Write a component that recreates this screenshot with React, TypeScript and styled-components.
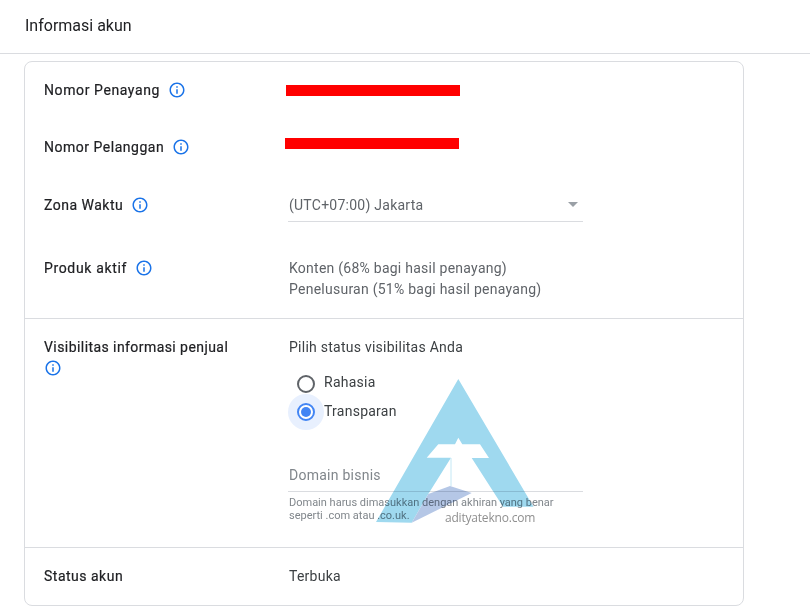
import React from 'react'
import styled, { createGlobalStyle } from 'styled-components'

const GlobalStyle = createGlobalStyle`
  html, body { margin: 0; padding: 0; background: #fff; }
  body { font-family: Roboto, "Liberation Sans", sans-serif; color: #202124; }
`

const Page = styled.div`
  position: relative;
  width: 810px;
  height: 610px;
  overflow: hidden;
`

const Header = styled.header`
  height: 51px;
  border-bottom: 1px solid #dadce0;
  display: flex;
  align-items: center;
  padding: 0 25px 2px;
  font-size: 16px;
  color: #202124;
`

const Card = styled.section`
  width: 720px;
  height: 545px;
  box-sizing: border-box;
  margin: 7px 0 0 24px;
  border: 1px solid #dadce0;
  border-radius: 8px;
  display: flex;
  flex-direction: column;
`

const Section = styled.div<{ $height: number }>`
  height: ${p => p.$height}px;
  box-sizing: border-box;
  & + & { border-top: 1px solid #dadce0; }
`

const Row = styled.div<{ $height?: number; $top?: boolean; $pad?: number }>`
  display: grid;
  grid-template-columns: 245px 1fr;
  padding-left: 19px;
  padding-top: ${p => p.$pad ?? 0}px;
  height: ${p => (p.$height ? `${p.$height}px` : 'auto')};
  box-sizing: border-box;
  align-items: ${p => (p.$top ? 'start' : 'center')};
`

const Label = styled.div<{ $track: number; $stack?: boolean; $down?: number }>`
  display: ${p => (p.$stack ? 'block' : 'flex')};
  align-items: center;
  column-gap: 8px;
  margin-top: ${p => p.$down ?? 0}px;
  font-size: 14px;
  font-weight: 400;
  -webkit-text-stroke: 0.2px #202124;
  line-height: 21px;
  letter-spacing: ${p => p.$track}px;
  color: #202124;
`

const InfoButton = styled.svg<{ $block?: boolean }>`
  width: 18px;
  height: 18px;
  fill: #1a73e8;
  flex: none;
  ${p => (p.$block ? 'display: block; margin-top: 1px;' : 'margin-top: -2px;')}
`

const Value = styled.div`
  font-size: 14px;
  line-height: 21px;
  letter-spacing: 0.25px;
  color: #5f6368;
`

const DarkValue = styled(Value)`
  color: #3c4043;
`

const Redaction = styled.div<{ $left: number; $up: number }>`
  width: 174px;
  height: 11px;
  background: #ff0000;
  margin-left: ${p => p.$left}px;
  margin-top: ${p => p.$up}px;
`

const Select = styled.div`
  width: 295px;
  height: 33px;
  box-sizing: border-box;
  margin: 13px 0 0 -1px;
  padding: 0 5px 0 1px;
  display: flex;
  align-items: center;
  justify-content: space-between;
  border-bottom: 1px solid #dadce0;
  font-size: 14px;
  letter-spacing: 0.25px;
  color: #5f6368;
`

const Caret = styled.span`
  width: 0;
  height: 0;
  border-left: 5px solid transparent;
  border-right: 5px solid transparent;
  border-top: 5px solid #9aa0a6;
  margin-top: -1px;
`

const RadioGroup = styled.div`
  margin: 12px 0 0 -1px;
  display: flex;
  flex-direction: column;
`

const RadioRow = styled.div`
  display: flex;
  align-items: center;
  height: 28px;
  padding-left: 9px;
  gap: 9px;
`

const RadioText = styled.span<{ $up: number }>`
  font-size: 14px;
  letter-spacing: 0.25px;
  color: #3c4043;
  margin-top: -${p => p.$up}px;
`

const RadioMark = styled.span<{ $on?: boolean }>`
  position: relative;
  width: 18px;
  height: 18px;
  box-sizing: border-box;
  border-radius: 50%;
  border: 2px solid ${p => (p.$on ? '#4285f4' : '#5f6368')};
  flex: none;
  display: flex;
  align-items: center;
  justify-content: center;
  background: #fff;
  ${p => (p.$on ? `
    box-shadow: 0 0 0 9px #e8f0fe;
    &::after {
      content: '';
      width: 10px;
      height: 10px;
      border-radius: 50%;
      background: #4285f4;
    }
  ` : '')}
`

const DomainField = styled.div`
  width: 295px;
  height: 30px;
  box-sizing: border-box;
  margin: 36px 0 0 -1px;
  padding: 0 0 4px 1px;
  border-bottom: 1px solid #dadce0;
  display: flex;
  align-items: center;
  font-size: 14px;
  letter-spacing: 0.25px;
  color: #80868b;
`

const Helper = styled.div`
  width: 290px;
  margin-top: 4px;
  font-size: 11px;
  line-height: 13px;
  color: #80868b;
`

const Watermark = styled.svg`
  position: absolute;
  left: 0;
  top: 0;
  width: 810px;
  height: 610px;
  mix-blend-mode: multiply;
  pointer-events: none;
`

const WatermarkText = styled.span`
  position: absolute;
  left: 445px;
  top: 510px;
  font-family: "Open Sans", sans-serif;
  font-size: 12px;
  line-height: 16px;
  letter-spacing: -0.2px;
  color: #8f8f8f;
`

const Info = ({ block }: { block?: boolean }) => (
  <InfoButton viewBox="0 0 24 24" $block={block}>
    <path d="M11 7h2v2h-2zm0 4h2v6h-2zm1-9C6.48 2 2 6.48 2 12s4.48 10 10 10 10-4.48 10-10S17.52 2 12 2zm0 18c-4.41 0-8-3.59-8-8s3.59-8 8-8 8 3.59 8 8-3.59 8-8 8z" />
  </InfoButton>
)

const App = () => {
  return (
    <Page>
      <GlobalStyle />
      <Header>Informasi akun</Header>
      <Card>
        <Section $height={256}>
          <Row $height={57}>
            <Label $track={0.6}>Nomor Penayang <Info /></Label>
            <Redaction $left={-3} $up={-1} />
          </Row>
          <Row $height={57}>
            <Label $track={0.52}>Nomor Pelanggan <Info /></Label>
            <Redaction $left={-4} $up={-8} />
          </Row>
          <Row $height={58} $top>
            <Label $track={0.5} $down={19}>Zona Waktu <Info /></Label>
            <Select>(UTC+07:00) Jakarta<Caret /></Select>
          </Row>
          <Row $top $pad={24}>
            <Label $track={0.65}>Produk aktif <Info /></Label>
            <Value>
              Konten (68% bagi hasil penayang)
              <br />
              Penelusuran (51% bagi hasil penayang)
            </Value>
          </Row>
        </Section>
        <Section $height={229}>
          <Row $top $pad={18}>
            <Label $track={0.43} $stack>
              Visibilitas informasi penjual
              <Info block />
            </Label>
            <div>
              <DarkValue>Pilih status visibilitas Anda</DarkValue>
              <RadioGroup>
                <RadioRow><RadioMark /><RadioText $up={4}>Rahasia</RadioText></RadioRow>
                <RadioRow><RadioMark $on /><RadioText $up={3}>Transparan</RadioText></RadioRow>
              </RadioGroup>
              <DomainField>Domain bisnis</DomainField>
              <Helper>
                Domain harus dimasukkan dengan akhiran yang benar
                <br />
                seperti .com atau .co.uk.
              </Helper>
            </div>
          </Row>
        </Section>
        <Section $height={58}>
          <Row $height={57}>
            <Label $track={0.5}>Status akun</Label>
            <DarkValue>Terbuka</DarkValue>
          </Row>
        </Section>
      </Card>
      <Watermark viewBox="0 0 810 610">
        <path fill="#9fd9ef" d="M458.3 379L533.5 506.7H503L471.7 458H489L480 444.3H462.3L458.3 437.7L455 444.3H438.3L426.7 457.7H451L428.3 494L411.7 522.7L376 522Z" />
        <path fill="#b5c7e6" d="M411.7 522.7L428.3 494L450 486L471.7 493Z" />
        <path stroke="#c4e8f5" strokeWidth="1" fill="none" d="M451 458V486" />
      </Watermark>
      <WatermarkText>adityatekno.com</WatermarkText>
    </Page>
  )
}

export default App
